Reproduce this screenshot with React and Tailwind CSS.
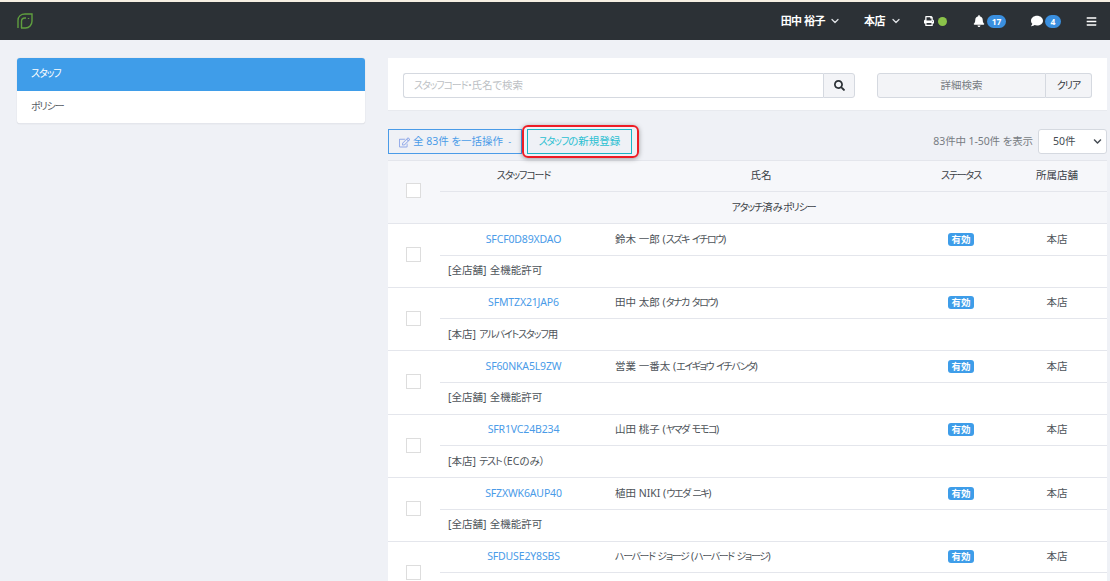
import React from "react";
import { FaPrint, FaBell, FaComment, FaBars, FaSearch, FaRegEdit, FaChevronDown } from "react-icons/fa";
import { ChevronDown } from "lucide-react";

const ROWS = [
  { code: "SFCF0D89XDAO", name: "鈴木 一郎 (スズキ イチロウ)", policy: "[全店舗] 全機能許可" },
  { code: "SFMTZX21JAP6", name: "田中 太郎 (タナカ タロウ)", policy: "[本店] アルバイトスタッフ用" },
  { code: "SF60NKA5L9ZW", name: "営業 一番太 (エイギョウ イチバンタ)", policy: "[全店舗] 全機能許可" },
  { code: "SFR1VC24B234", name: "山田 桃子 (ヤマダ モモコ)", policy: "[本店] テスト（ECのみ）" },
  { code: "SFZXWK6AUP40", name: "植田 NIKI (ウエダ ニキ)", policy: "[全店舗] 全機能許可" },
  { code: "SFDUSE2Y8SBS", name: "ハーバード ジョージ (ハーバード ジョージ)", policy: "" },
];

// katakana in the reference font is much narrower than the kanji
function Jp({ children, tight }) {
  return children.split(/([\u30A0-\u30FF]+)/).map((part, i) =>
    i % 2 ? (
      <span key={i} className={tight ? "text-[10px] tracking-[-1.4px]" : "text-[10px] tracking-[-1.1px]"}>
        {part}
      </span>
    ) : (
      part
    )
  );
}

function Leaf() {
  return (
    <svg width="16" height="16" viewBox="0 0 16 16" fill="none" stroke="#5f9e3f" strokeWidth="1.4">
      <path d="M1 15V7.500C1 3.500 4 1 8 1h7v7c0 4-2.800 7-6.500 7H4" />
      <path d="M4.500 15V8.500C4.500 6.500 6 5 8 5h1" />
      <path d="M11.500 5v1" />
    </svg>
  );
}

function Checkbox() {
  return <span className="block w-[15px] h-[15px] border border-[#dddddd] bg-white" />;
}

function StaffRow({ row }) {
  return (
    <div className="flex h-[63.5px] border-t border-[#e4e6ec] bg-white">
      <div className="w-[52px] flex items-center justify-center pr-[1px] pb-[1px]">
        <Checkbox />
      </div>
      <div className="flex-1 flex flex-col">
        <div className="flex-1 flex items-center border-b border-[#e4e6ec]">
          <a className="w-[167px] text-center text-[#4a9be8] tracking-[-0.15px]">{row.code}</a>
          <div className="w-[308px] pl-2 text-[#4d5359]">
            <Jp tight>{row.name}</Jp>
          </div>
          <div className="w-[92px] flex justify-center">
            <span className="w-[26px] h-[13px] rounded-[3px] bg-[#3e9de9] text-white text-[9.500px] font-bold leading-[13px] text-center">
              有効
            </span>
          </div>
          <div className="w-[100px] text-center text-[#4d5359]">本店</div>
        </div>
        <div className="flex-1 flex items-center pl-2 text-[#4d5359] [word-spacing:0.500px]">
          <span className="whitespace-pre">
            <Jp>{row.policy}</Jp>
          </span>
        </div>
      </div>
    </div>
  );
}

export default function App() {
  return (
    <div className="h-[581px] overflow-hidden bg-[#eff1f6] text-[10.500px] [font-family:'Noto_Sans','Noto_Sans_CJK_JP',sans-serif] [font-feature-settings:'palt']">
      <div className="h-[2px] bg-[#f6efe3]" />
      <header className="h-[38px] bg-[#2c3136] flex items-center pl-[17px] text-white font-bold text-[11px]">
        <Leaf />
        <div className="ml-auto flex items-center pr-[13px]">
          <span className="tracking-[-0.5px]">田中 裕子</span>
          <ChevronDown size={12} strokeWidth={2.5} className="ml-[4px] text-[#dfe2e6]" />
          <span className="ml-[23px] tracking-[-0.5px]">本店</span>
          <ChevronDown size={12} strokeWidth={2.5} className="ml-[5px] text-[#dfe2e6]" />
          <FaPrint size={10} className="ml-[22px]" />
          <span className="ml-[4px] w-[9px] h-[9px] rounded-full bg-[#8bc34a]" />
          <FaBell size={12} className="ml-[26px]" />
          <span className="ml-[2px] w-[19px] h-[13px] rounded-full bg-[#3a8fdf] text-[8.500px] leading-[13px] text-center">17</span>
          <FaComment size={12} className="ml-[25px]" />
          <span className="ml-[2px] w-[16px] h-[13px] rounded-full bg-[#3a8fdf] text-[8.500px] leading-[13px] text-center">4</span>
          <FaBars size={11} className="ml-[25px]" />
        </div>
      </header>

      <div className="flex gap-[23px] pl-[17px] pt-[18px]">
        <aside className="w-[348px]">
          <div className="rounded-[3px] overflow-hidden bg-white border-b border-[#e4e6ec] shadow-[0_0_1px_rgba(0,0,0,0.2)]">
            <div className="h-[33px] bg-[#3f9de9] text-white flex items-center pl-[14px] pb-[1px]">
              <span>
                <Jp>スタッフ</Jp>
              </span>
            </div>
            <div className="h-[32px] text-[#555b62] flex items-center pl-[14px]">
              <span>
                <Jp>ポリシー</Jp>
              </span>
            </div>
          </div>
        </aside>

        <main className="w-[719px] relative">
          <div className="h-[53px] bg-white flex items-start pt-[15px] pl-[15px] border-b border-[#e8eaef]">
            <div className="w-[420px] h-[25px] border border-[#d5d9e0] border-r-0 rounded-l-[3px] flex items-center pl-[10px] text-[#bcbfc4]">
              <span>
                <Jp>スタッフコード・氏名で検索</Jp>
              </span>
            </div>
            <div className="w-[32px] h-[25px] border border-[#d5d9e0] rounded-r-[3px] bg-[#f3f4f7] flex items-center justify-center text-[#2c3136]">
              <FaSearch size={11} />
            </div>
            <div className="ml-[22px] w-[169px] h-[25px] border border-[#d5d9e0] rounded-l-[3px] bg-[#f3f4f7] flex items-center justify-center text-[#777c82]">
              詳細検索
            </div>
            <div className="w-[46px] h-[25px] border border-l-0 border-[#d5d9e0] rounded-r-[3px] bg-[#f3f4f7] flex items-center justify-center text-[#33383d]">
              <span>
                <Jp>クリア</Jp>
              </span>
            </div>
          </div>

          <div className="flex items-center mt-[18px] h-[25px]">
            <div className="w-[134px] h-[25px] border border-[#4a9be8] flex items-center justify-center gap-[3px] text-[#4a9be8] pt-[1px]">
              <FaRegEdit size={11} className="text-[#8fa8e8]" />
              <span>全 83件 を一括操作</span>
              <span className="ml-[2px] text-[9px]">-</span>
            </div>
            <div className="ml-[5px] w-[105px] h-[25px] border border-[#19b5c6] flex items-center justify-center text-[#2cc0d2] pt-[1px]">
              <span>
                <Jp>スタッフの新規登録</Jp>
              </span>
            </div>
            <div className="ml-auto flex items-center">
              <span className="text-[#777c82] pt-[1px] tracking-[-0.1px]">83件中 1-50件 を表示</span>
              <div className="ml-[5px] w-[69px] h-[25px] border border-[#d5d9e0] rounded-[3px] bg-white flex items-center pl-[14px] text-[#444b52]">
                50件
                <FaChevronDown size={9} className="ml-auto mr-[4px] text-[#444b52]" />
              </div>
            </div>
          </div>

          {/* red annotation around the new-staff button */}
          <div className="absolute left-[134px] top-[67px] w-[117px] h-[33px] rounded-[6px] border-2 border-[#ee1c25] shadow-[0_1px_5px_rgba(0,0,0,0.35)]" />

          <div className="mt-[6px] flex h-[63px] bg-[#f6f7fa] border-t border-[#e4e6ec] text-[#3a4046]">
            <div className="w-[52px] flex items-center justify-center pr-[1px] pb-[3px]">
              <Checkbox />
            </div>
            <div className="flex-1 flex flex-col">
              <div className="h-[31px] flex items-center border-b border-[#e4e6ec]">
                <div className="w-[167px] text-center">
                  <Jp>スタッフコード</Jp>
                </div>
                <div className="w-[308px] text-center">氏名</div>
                <div className="w-[92px] text-center">
                  <Jp>ステータス</Jp>
                </div>
                <div className="w-[100px] text-center">所属店舗</div>
              </div>
              <div className="flex-1 flex items-center justify-center">
                <span>
                  <Jp>アタッチ済みポリシー</Jp>
                </span>
              </div>
            </div>
          </div>

          {ROWS.map((row) => (
            <StaffRow key={row.code} row={row} />
          ))}
        </main>
      </div>
    </div>
  );
}
